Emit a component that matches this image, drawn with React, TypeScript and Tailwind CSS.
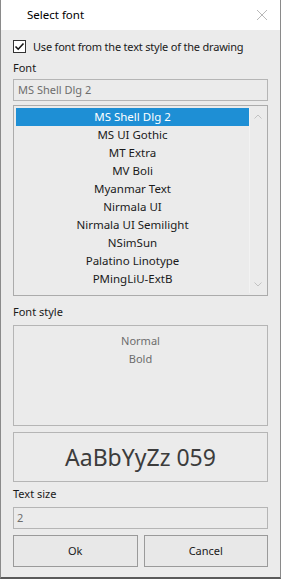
import React from "react";

const fonts = [
  "MS Shell Dlg 2",
  "MS UI Gothic",
  "MT Extra",
  "MV Boli",
  "Myanmar Text",
  "Nirmala UI",
  "Nirmala UI Semilight",
  "NSimSun",
  "Palatino Linotype",
  "PMingLiU-ExtB",
  "Poor",
];

export default function App() {
  return (
    <div
      className="w-[281px] h-[579px] flex flex-col bg-[#ebebeb] border-l border-r border-b-2 border-l-[#8a8a8a] border-r-[#8a8a8a] border-b-[#5a5a5a] text-[11px] text-[#1a1a1a] overflow-hidden"
      style={{ fontFamily: '"Noto Sans", "Open Sans", sans-serif' }}
    >
      <div className="h-[30px] bg-white flex items-center justify-between pl-[26px] pr-[10px] shrink-0">
        <span className="text-[11.5px] text-black">Select font</span>
        <svg width="12" height="12" viewBox="0 0 12 12" className="mr-[2px]">
          <path d="M1 1 L11 11 M11 1 L1 11" stroke="#b8b8b8" strokeWidth="1" />
        </svg>
      </div>
      <div className="flex flex-col px-[12px] pt-[9px]">
        <div className="flex items-center h-[15px]">
          <div className="w-[13px] h-[13px] shrink-0 border border-[#333] bg-white flex items-center justify-center">
            <svg width="11" height="11" viewBox="0 0 11 11">
              <path d="M1.5 5.5 L4.2 8.2 L9.5 2.5" fill="none" stroke="#111" strokeWidth="1.6" />
            </svg>
          </div>
          <span className="ml-[7px] leading-[15px] whitespace-nowrap text-[11px] tracking-[-0.2px]">
            Use font from the text style of the drawing
          </span>
        </div>
        <div className="mt-[6px] leading-[16px]">Font</div>
        <div className="mt-[3px] h-[22px] border border-[#b5b5b5] flex items-center px-[4px] text-[#6d6d6d]">
          MS Shell Dlg 2
        </div>
        <div className="mt-[4px] h-[191px] border border-[#ababab] flex p-[2px] pr-[1px] overflow-hidden">
          <div className="flex-1 flex flex-col overflow-hidden">
            {fonts.map((f, i) => (
              <div
                key={f}
                className={
                  "h-[18px] shrink-0 flex items-center justify-center text-[11.5px] " +
                  (i === 0 ? "bg-[#1e8fd5] text-white" : "text-[#1a1a1a]")
                }
              >
                {f}
              </div>
            ))}
          </div>
          <div className="w-[17px] flex flex-col items-center justify-between py-[6px] border-l border-[#f2f2f2]">
            <svg width="8" height="5" viewBox="0 0 8 5">
              <path d="M0.5 4.5 L4 1 L7.5 4.5" fill="none" stroke="#c2c2c2" strokeWidth="1" />
            </svg>
            <svg width="8" height="5" viewBox="0 0 8 5">
              <path d="M0.5 0.5 L4 4 L7.5 0.5" fill="none" stroke="#c2c2c2" strokeWidth="1" />
            </svg>
          </div>
        </div>
        <div className="mt-[8px] leading-[16px]">Font style</div>
        <div className="mt-[5px] h-[101px] border border-[#b5b5b5] flex flex-col items-center pt-[6px] text-[#6d6d6d]">
          <div className="h-[18px] flex items-center">Normal</div>
          <div className="h-[18px] flex items-center">Bold</div>
        </div>
        <div className="mt-[6px] h-[50px] border border-[#b5b5b5] flex items-center justify-center text-[23px] text-[#3c3c3c]">
          AaBbYyZz 059
        </div>
        <div className="mt-[4px] leading-[16px]">Text size</div>
        <div className="mt-[5px] h-[22px] border border-[#b5b5b5] flex items-center px-[3px] text-[#6d6d6d]">
          2
        </div>
        <div className="mt-[6px] flex gap-[6px]">
          <button className="flex-1 h-[32px] border border-[#9a9a9a] bg-[#e8e8e8] text-[11px] text-[#1a1a1a]">
            Ok
          </button>
          <button className="flex-1 h-[32px] border border-[#9a9a9a] bg-[#e8e8e8] text-[11px] text-[#1a1a1a]">
            Cancel
          </button>
        </div>
      </div>
    </div>
  );
}
